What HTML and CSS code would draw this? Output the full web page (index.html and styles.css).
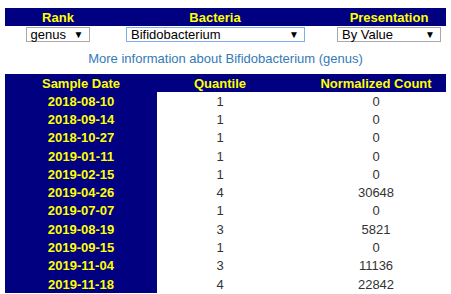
FILE: index.html
```html
<!DOCTYPE html>
<html>
<head>
<meta charset="utf-8">
<link rel="stylesheet" href="styles.css">
</head>
<body>
<table class="controls">
  <colgroup><col class="c1"><col class="c2"><col class="c3"></colgroup>
  <tr class="head">
    <th>Rank</th>
    <th>Bacteria</th>
    <th class="pres">Presentation</th>
  </tr>
  <tr>
    <td><span class="sel w-rank"><span class="val">genus</span><span class="arrow">▼</span></span></td>
    <td><span class="sel w-bact focus"><span class="val">Bifidobacterium</span><span class="arrow">▼</span></span></td>
    <td class="pres"><span class="sel w-pres"><span class="val">By Value</span><span class="arrow">▼</span></span></td>
  </tr>
</table>
<p class="more"><a href="#">More information about Bifidobacterium (genus)</a></p>
<table class="data">
  <colgroup><col class="d1"><col class="d2"><col class="d3"></colgroup>
  <tr class="head"><th>Sample Date</th><th>Quantile</th><th class="cnt">Normalized Count</th></tr>
  <tr><th>2018-08-10</th><td>1</td><td class="cnt">0</td></tr>
  <tr><th>2018-09-14</th><td>1</td><td class="cnt">0</td></tr>
  <tr><th>2018-10-27</th><td>1</td><td class="cnt">0</td></tr>
  <tr><th>2019-01-11</th><td>1</td><td class="cnt">0</td></tr>
  <tr><th>2019-02-15</th><td>1</td><td class="cnt">0</td></tr>
  <tr><th>2019-04-26</th><td>4</td><td class="cnt">30648</td></tr>
  <tr><th>2019-07-07</th><td>1</td><td class="cnt">0</td></tr>
  <tr><th>2019-08-19</th><td>3</td><td class="cnt">5821</td></tr>
  <tr><th>2019-09-15</th><td>1</td><td class="cnt">0</td></tr>
  <tr><th>2019-11-04</th><td>3</td><td class="cnt">11136</td></tr>
  <tr><th>2019-11-18</th><td>4</td><td class="cnt">22842</td></tr>
</table>
</body>
</html>
```
FILE: styles.css
```css
html, body { background: #fff; }
body {
  margin: 8px 5px 0 5px;
  font-family: "Liberation Sans", Arial, sans-serif;
  font-size: 13px;
  color: #333;
}
table { border-collapse: collapse; border-spacing: 0; table-layout: fixed; }
th, td { padding: 0; text-align: center; }
.controls { width: 441px; }
.controls .c1 { width: 106px; }
.controls .c2 { width: 208px; }
.controls .c3 { width: 127px; }
.head th {
  background: #000080;
  color: #ffff00;
  font-weight: bold;
  height: 18px;
  font-size: 13px;
}
.controls .pres { padding-left: 13px; }
.controls td { height: 18px; vertical-align: top; padding-top: 1px; }
.sel {
  position: relative;
  display: inline-block;
  box-sizing: border-box;
  height: 15px;
  border: 1px solid #a9a9a9;
  background: #fff;
  text-align: left;
  color: #000;
  font-size: 13px;
  line-height: 13px;
  vertical-align: top;
}
.sel .val { padding-left: 4px; }
.sel .arrow {
  position: absolute;
  right: 5px;
  top: 1px;
  font-size: 10px;
  line-height: 11px;
  color: #000;
}
.w-rank { width: 64px; margin-right: 1px; }
.w-bact { width: 179px; margin-left: 1px; }
.w-pres { width: 104px; }
.focus { border-color: #7eaee8; }
.more {
  margin: 6px 0 0 0;
  text-align: center;
  height: 23px;
  line-height: 15px;
}
.more a { color: #337ab7; text-decoration: none; }
.data { width: 441px; margin-top: 0; }
.data .d1 { width: 152px; }
.data .d2 { width: 126px; }
.data .d3 { width: 163px; }
.data th { background: #000080; color: #ffff00; font-weight: bold; height: 18px; }
.data td { height: 18.3px; color: #333; }
.data .cnt { padding-left: 23px; }
```
